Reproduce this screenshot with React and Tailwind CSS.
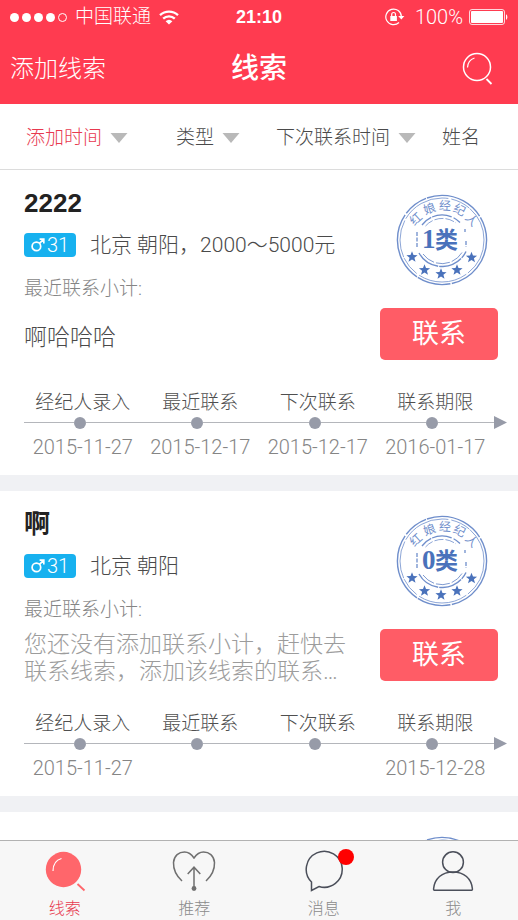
import React, { useState } from "react";

const SORTS = [
  { key: "created", label: "添加时间", arrow: true, space: "mr-12" },
  { key: "type", label: "类型", arrow: true, space: "mr-9" },
  { key: "next", label: "下次联系时间", arrow: true, space: "mr-[26px]" },
  { key: "name", label: "姓名", arrow: false, space: "" },
];

const CLUES = [
  {
    id: 1,
    name: "2222",
    age: 31,
    info: "北京 朝阳，2000～5000元",
    note: "啊哈哈哈",
    level: 1,
    dates: ["2015-11-27", "2015-12-17", "2015-12-17", "2016-01-17"],
  },
  {
    id: 2,
    name: "啊",
    age: 31,
    info: "北京 朝阳",
    note: "",
    level: 0,
    dates: ["2015-11-27", "", "", "2015-12-28"],
  },
  {
    id: 3,
    name: "u",
    age: 31,
    info: "北京 朝阳",
    note: "",
    level: 0,
    dates: ["2015-11-27", "", "", "2015-12-28"],
  },
];

const STEPS = ["经纪人录入", "最近联系", "下次联系", "联系期限"];
const EMPTY_NOTE = "您还没有添加联系小计，赶快去联系线索，添加该线索的联系…";

function StatusBar() {
  return (
    <div className="grid h-[34px] grid-cols-[1fr_auto_1fr] items-center px-2.5">
      <div className="flex items-center gap-2">
        <div className="flex gap-[3px]">
          <span className="size-[9px] rounded-full bg-white" />
          <span className="size-[9px] rounded-full bg-white" />
          <span className="size-[9px] rounded-full bg-white" />
          <span className="size-[9px] rounded-full bg-white" />
          <span className="size-[9px] rounded-full border border-white" />
        </div>
        <span className="text-[19px] leading-6 font-light">中国联通</span>
        <svg viewBox="0 0 20 15" className="h-[15px] w-5" fill="none" stroke="#fff">
          <path d="M1 5.2a13 13 0 0 1 18 0" strokeWidth="2.3" />
          <path d="M4.2 8.7a8.4 8.4 0 0 1 11.6 0" strokeWidth="2.3" />
          <path d="M10 14.5 6.6 11.3a5 5 0 0 1 6.8 0Z" fill="#fff" stroke="none" />
        </svg>
      </div>
      <span className="font-['Liberation_Sans',sans-serif] text-lg leading-6 font-bold">21:10</span>
      <div className="flex items-center justify-end">
        <svg viewBox="0 0 20 18" className="mr-2.5 h-[18px] w-5" fill="none" stroke="#fff">
          <path d="M16.4 9.5V8.6A7.8 7.8 0 1 0 14 14.5" strokeWidth="1.2" />
          <path d="M13.2 8h6.2l-3.1 3.6Z" fill="#fff" stroke="none" />
          <rect x="5.3" y="8" width="6.6" height="5" fill="#fff" stroke="none" />
          <path d="M6.7 8V6.4a1.9 1.9 0 0 1 3.8 0V8" strokeWidth="1.2" />
        </svg>
        <span className="mr-1.5 text-xl leading-6 font-light">100%</span>
        <svg viewBox="0 0 39 16" className="h-4 w-[39px]">
          <rect x="0.5" y="0.5" width="35" height="15" rx="2.5" fill="none" stroke="#fff" strokeOpacity="0.8" />
          <rect x="2" y="2" width="32" height="12" rx="1" fill="#fff" />
          <path d="M37 5.2c1.8.6 1.8 5 0 5.6Z" fill="#fff" />
        </svg>
      </div>
    </div>
  );
}

function Header() {
  return (
    <header className="shrink-0 bg-[#ff3b50] text-white">
      <StatusBar />
      <div className="grid h-[70px] grid-cols-[1fr_auto_1fr] items-center px-2.5">
        <button type="button" className="justify-self-start text-2xl font-light">
          添加线索
        </button>
        <h1 className="text-[28px] leading-9 font-medium">线索</h1>
        <button type="button" aria-label="搜索" className="justify-self-end pr-3.5">
          <svg viewBox="0 0 32 34" className="h-[34px] w-8" fill="none" stroke="#fff" strokeWidth="1.5">
            <circle cx="15" cy="15" r="13.5" />
            <path d="M5.5 15.5C5.8 10.5 8.5 7.2 12.5 6" strokeWidth="1.2" />
            <path d="m24.5 27 5 5" strokeWidth="1.8" />
          </svg>
        </button>
      </div>
    </header>
  );
}

function SortBar({ active, onChange }) {
  return (
    <div className="flex h-[66px] shrink-0 items-center border-b border-[#dcdcdc] bg-white pt-0.5 pl-[26px]">
      {SORTS.map((s) => (
        <button
          key={s.key}
          type="button"
          onClick={() => onChange(s.key)}
          className={`flex shrink-0 items-center gap-2 text-[19px] leading-6 font-light ${s.space} ${
            active === s.key ? "text-[#e8394f]" : "text-[#4a4a4a]"
          }`}
        >
          {s.label}
          {s.arrow && (
            <svg viewBox="0 0 18 10" className="h-2.5 w-[18px]" fill="#b9b9b9">
              <path d="M0.5 0h17L9 10Z" />
            </svg>
          )}
        </button>
      ))}
    </div>
  );
}

const STAR =
  "M0-5.8 1.5-1.9 5.6-1.8 2.4.8 3.5 4.8 0 2.5-3.5 4.8-2.4.8-5.6-1.8-1.5-1.9Z";

function Stamp({ level }) {
  return (
    <svg viewBox="0 0 92 92" className="mr-2.5 size-[92px]" fill="none" stroke="#6f8ecb">
      <circle cx="46" cy="46" r="44.6" strokeWidth="1.4" strokeDasharray="60 1.5 34 1 70 2 25 1" />
      <circle cx="46" cy="46" r="42" strokeWidth="0.8" strokeDasharray="38 2 50 3 20 1" />
      <path d="M26 31A25 25 0 0 1 64 28.5" strokeWidth="1.3" strokeDasharray="12 1 20 2" />
      <path d="M29.5 32A22.5 22.5 0 0 1 60 29" strokeWidth="0.8" strokeDasharray="9 2" />
      <path d="M23 59A26.5 26.5 0 0 0 70 57.5" strokeWidth="1.4" strokeDasharray="24 1" />
      <path d="M27 60A23.5 23.5 0 0 0 66 58.5" strokeWidth="0.9" strokeDasharray="14 2" />
      <path d="M21 38v15M69 35v3M70 47v6" strokeWidth="1.3" strokeDasharray="4 1.5" />
      <g fill="#6f8ecb" stroke="none" fontSize="12" textAnchor="middle">
        <text transform="translate(20 25) rotate(-42)" y="4">红</text>
        <text transform="translate(33.5 15) rotate(-20)" y="4">娘</text>
        <text transform="translate(49 12) rotate(4)" y="4">经</text>
        <text transform="translate(63.5 16) rotate(26)" y="4">纪</text>
        <text transform="translate(75.5 26) rotate(46)" y="4">人</text>
      </g>
      <g fill="#4a72bb" stroke="none" fontWeight="700">
        <text x="26" y="54" fontSize="27" className="font-['Liberation_Serif',serif]">
          {level}
        </text>
        <text x="39" y="54" fontSize="23">类</text>
      </g>
      <g fill="#4a72bb" stroke="none">
        <path d={STAR} transform="translate(16 63)" />
        <path d={STAR} transform="translate(28.5 76)" />
        <path d={STAR} transform="translate(45 80)" />
        <path d={STAR} transform="translate(61 76)" />
        <path d={STAR} transform="translate(75.5 63.5)" />
      </g>
    </svg>
  );
}

function Timeline({ dates }) {
  return (
    <div className="mt-[27px] pl-6 font-light">
      <div className="mr-6 grid grid-cols-4 text-center text-[19px] leading-6 whitespace-nowrap text-[#4f4f4f]">
        {STEPS.map((step) => (
          <span key={step}>{step}</span>
        ))}
      </div>
      <div className="mt-px mr-[11px] flex items-center">
        {STEPS.map((step) => (
          <div key={step} className="flex flex-1 items-center">
            <span className="h-px flex-1 bg-[#b4b6bb]" />
            <span className="size-3 rounded-full bg-[#979ba8]" />
            <span className="h-px flex-1 bg-[#b4b6bb]" />
            <span className="h-px w-1.5 bg-[#b4b6bb]" />
          </div>
        ))}
        <svg viewBox="0 0 13 13" className="size-[13px]" fill="#979ba8">
          <path d="M0 0 13 6.5 0 13Z" />
        </svg>
      </div>
      <div className="mt-1.5 mr-6 grid h-6 grid-cols-4 text-center text-xl leading-6 whitespace-nowrap text-[#858585]">
        {dates.map((date, i) => (
          <time key={i}>{date}</time>
        ))}
      </div>
    </div>
  );
}

function ClueCard({ clue }) {
  return (
    <article className="mb-4 shrink-0 bg-white pb-4">
      <div className="flex justify-between pr-5 pl-6">
        <div className="min-w-0 pt-4">
          <h2 className="font-['Liberation_Sans','Noto_Sans_CJK_SC',sans-serif] text-[26px] leading-[34px] font-bold text-[#222]">
            {clue.name}
          </h2>
          <div className="mt-[13px] flex h-6 items-center gap-3.5">
            <span className="flex h-6 w-[52px] items-center justify-center gap-0.5 rounded bg-[#17b1ef] text-xl font-light text-white">
              <svg viewBox="0 0 14 14" className="size-3.5" fill="none" stroke="#fff" strokeWidth="1.7">
                <circle cx="5.4" cy="8.4" r="4.3" />
                <path d="m8.5 5.3 4-4M8.6 1.2h4.2v4.2" />
              </svg>
              {clue.age}
            </span>
            <span className="text-[21px] leading-6 font-light whitespace-nowrap text-[#4a4a4a]">
              {clue.info}
            </span>
          </div>
          <p className="mt-5 text-[19px] leading-6 font-light text-[#858585]">最近联系小计:</p>
          <div className="mt-[9px] flex h-[54px] max-w-[326px] items-center text-[23px] leading-[27px] font-light">
            <p className={clue.note ? "text-[#4a4a4a]" : "text-[#9c9c9c]"}>
              {clue.note || EMPTY_NOTE}
            </p>
          </div>
        </div>
        <div className="flex shrink-0 flex-col items-end pt-6">
          <Stamp level={clue.level} />
          <button
            type="button"
            className="mt-[22px] h-[52px] w-[118px] rounded-[5px] bg-[#ff5c66] text-[27px] text-white"
          >
            联系
          </button>
        </div>
      </div>
      <Timeline dates={clue.dates} />
    </article>
  );
}

const TABS = [
  {
    key: "clue",
    label: "线索",
    icon: (
      <>
        <circle cx="20.5" cy="19.5" r="17.7" fill="#ff666b" stroke="none" />
        <path d="M10 21C10 14.5 13 10 18.5 8.5" stroke="#fff" strokeWidth="1.2" />
        <path d="m34.5 34 7 6.5" stroke="#ff666b" strokeWidth="1.8" />
      </>
    ),
  },
  {
    key: "recommend",
    label: "推荐",
    icon: (
      <g stroke="#707070">
        <path d="M10 31C3.5 25 1.3 18 1.5 12.5 2 5.5 7 2 12.5 2 17.5 2 20 5 22 8 24 5 26.5 2 31.5 2 37 2 42 5.5 42.5 12.5 42.7 18 40.5 25 34 31" />
        <path d="M22 38V17.5M15.7 24 22 17.2 28.3 24" />
        <circle cx="22" cy="38.5" r="2.4" fill="#707070" stroke="none" />
      </g>
    ),
  },
  {
    key: "message",
    label: "消息",
    icon: <path d="M9.5 32A18 18 0 1 1 17 36.5L9.5 40.5Z" stroke="#4b4f5a" />,
    badge: true,
  },
  {
    key: "me",
    label: "我",
    icon: (
      <g stroke="#4b4f5a">
        <circle cx="22" cy="12.2" r="10.4" />
        <path d="M4 40.3H40Q41.6 40.3 41.4 38.8C40.5 28.5 33 22 22 22S3.5 28.5 2.6 38.8Q2.4 40.3 4 40.3Z" />
      </g>
    ),
  },
];

function TabBar({ active, onChange }) {
  return (
    <nav className="grid h-20 shrink-0 grid-cols-4 border-t border-[#b2b2b2] bg-[#f7f7f7]">
      {TABS.map((tab) => (
        <button
          key={tab.key}
          type="button"
          onClick={() => onChange(tab.key)}
          className={`flex flex-col items-center pt-[9px] text-base leading-5 font-light ${
            active === tab.key ? "text-[#e8394f]" : "text-[#8a8a8a]"
          }`}
        >
          <span className="relative">
            <svg viewBox="0 0 44 44" className="size-11" fill="none" strokeWidth="1.5">
              {tab.icon}
            </svg>
            {tab.badge && (
              <span className="absolute -top-px -right-2 size-4 rounded-full bg-[#ff0000]" />
            )}
          </span>
          <span className="mt-[5px]">{tab.label}</span>
        </button>
      ))}
    </nav>
  );
}

export default function App() {
  const [sort, setSort] = useState("created");
  const [tab, setTab] = useState("clue");

  return (
    <div className="flex h-screen flex-col overflow-hidden bg-[#f0f1f4] font-['Roboto','Noto_Sans_CJK_SC',sans-serif]">
      <Header />
      <SortBar active={sort} onChange={setSort} />
      <main className="flex min-h-0 flex-1 flex-col overflow-hidden">
        {CLUES.map((clue) => (
          <ClueCard key={clue.id} clue={clue} />
        ))}
      </main>
      <TabBar active={tab} onChange={setTab} />
    </div>
  );
}
